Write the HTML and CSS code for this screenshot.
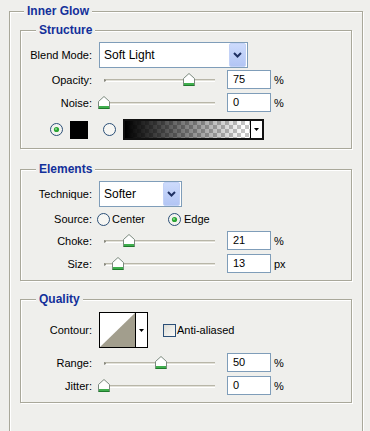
FILE: index.html
```html
<!DOCTYPE html>
<html>
<head>
<meta charset="utf-8">
<link rel="stylesheet" href="styles.css">
</head>
<body>
<fieldset class="group outer">
  <legend>Inner Glow</legend>

  <fieldset class="group inner structure">
    <legend>Structure</legend>
    <div class="row r-select r-blend">
      <span class="lbl">Blend Mode:</span>
      <div class="select wide"><span>Soft Light</span><span class="sel-btn"><svg width="9" height="6" viewBox="0 0 9 6"><path d="M1 1 L4.5 4.5 L8 1" fill="none" stroke="#1f3163" stroke-width="2"/></svg></span></div>
    </div>
    <div class="row r-slider r-first">
      <span class="lbl">Opacity:</span>
      <div class="slider"><div class="track"></div><svg class="thumb" style="left:85px" width="12" height="13" viewBox="0 0 12 13"><path d="M0.5 5.5 L6 0.5 L11.5 5.5 V12.5 H0.5 Z" fill="#fff" stroke="#7b8a7e"/><rect x="1" y="10" width="10" height="2" fill="#3fae4d"/><path d="M0.5 12.5 H11.5" stroke="#1f7a2c"/></svg></div>
      <div class="num">75</div><span class="unit">%</span>
    </div>
    <div class="row r-slider r-next">
      <span class="lbl">Noise:</span>
      <div class="slider"><div class="track"></div><svg class="thumb" style="left:0px" width="12" height="13" viewBox="0 0 12 13"><path d="M0.5 5.5 L6 0.5 L11.5 5.5 V12.5 H0.5 Z" fill="#fff" stroke="#7b8a7e"/><rect x="1" y="10" width="10" height="2" fill="#3fae4d"/><path d="M0.5 12.5 H11.5" stroke="#1f7a2c"/></svg></div>
      <div class="num">0</div><span class="unit">%</span>
    </div>
    <div class="row r-color">
      <svg class="radio first" width="13" height="13" viewBox="0 0 13 13"><circle cx="6.5" cy="6.5" r="6" fill="#f3f3ef" stroke="#2b4f77"/><circle cx="6.5" cy="6.5" r="2.6" fill="#2aa534"/><circle cx="6" cy="6" r="1" fill="#8fdc8f"/></svg>
      <div class="swatch"></div>
      <svg class="radio second" width="13" height="13" viewBox="0 0 13 13"><circle cx="6.5" cy="6.5" r="6" fill="#f6f6f3" stroke="#2b4f77"/></svg>
      <div class="gradient"><div class="grad-fill"></div><div class="grad-btn"><svg width="5" height="3" viewBox="0 0 5 3"><path d="M0 0 H5 L2.5 3 Z" fill="#000"/></svg></div></div>
    </div>
  </fieldset>

  <fieldset class="group inner elements">
    <legend>Elements</legend>
    <div class="row r-select r-tech">
      <span class="lbl">Technique:</span>
      <div class="select narrow"><span>Softer</span><span class="sel-btn"><svg width="9" height="6" viewBox="0 0 9 6"><path d="M1 1 L4.5 4.5 L8 1" fill="none" stroke="#1f3163" stroke-width="2"/></svg></span></div>
    </div>
    <div class="row r-source">
      <span class="lbl">Source:</span>
      <svg class="radio first" width="13" height="13" viewBox="0 0 13 13"><circle cx="6.5" cy="6.5" r="6" fill="#f6f6f3" stroke="#2b4f77"/></svg>
      <span class="opt-text">Center</span>
      <svg class="radio second" width="13" height="13" viewBox="0 0 13 13"><circle cx="6.5" cy="6.5" r="6" fill="#f3f3ef" stroke="#2b4f77"/><circle cx="6.5" cy="6.5" r="2.6" fill="#2aa534"/><circle cx="6" cy="6" r="1" fill="#8fdc8f"/></svg>
      <span class="opt-text edge">Edge</span>
    </div>
    <div class="row r-slider r-first">
      <span class="lbl">Choke:</span>
      <div class="slider"><div class="track"></div><svg class="thumb" style="left:25px" width="12" height="13" viewBox="0 0 12 13"><path d="M0.5 5.5 L6 0.5 L11.5 5.5 V12.5 H0.5 Z" fill="#fff" stroke="#7b8a7e"/><rect x="1" y="10" width="10" height="2" fill="#3fae4d"/><path d="M0.5 12.5 H11.5" stroke="#1f7a2c"/></svg></div>
      <div class="num">21</div><span class="unit">%</span>
    </div>
    <div class="row r-slider r-next">
      <span class="lbl">Size:</span>
      <div class="slider"><div class="track"></div><svg class="thumb" style="left:14px" width="12" height="13" viewBox="0 0 12 13"><path d="M0.5 5.5 L6 0.5 L11.5 5.5 V12.5 H0.5 Z" fill="#fff" stroke="#7b8a7e"/><rect x="1" y="10" width="10" height="2" fill="#3fae4d"/><path d="M0.5 12.5 H11.5" stroke="#1f7a2c"/></svg></div>
      <div class="num">13</div><span class="unit">px</span>
    </div>
  </fieldset>

  <fieldset class="group inner quality">
    <legend>Quality</legend>
    <div class="row r-contour">
      <span class="lbl">Contour:</span>
      <div class="contour">
        <svg class="graph" width="35" height="34" viewBox="0 0 35 34"><rect width="35" height="34" fill="#fff"/><path d="M0 34 L35 0 V34 Z" fill="#a29e8d"/></svg>
        <div class="contour-btn"><svg width="5" height="3" viewBox="0 0 5 3"><path d="M0 0 H5 L2.5 3 Z" fill="#000"/></svg></div>
      </div>
      <div class="checkbox"></div>
      <span class="cb-label">Anti-aliased</span>
    </div>
    <div class="row r-slider r-range">
      <span class="lbl">Range:</span>
      <div class="slider"><div class="track"></div><svg class="thumb" style="left:57px" width="12" height="13" viewBox="0 0 12 13"><path d="M0.5 5.5 L6 0.5 L11.5 5.5 V12.5 H0.5 Z" fill="#fff" stroke="#7b8a7e"/><rect x="1" y="10" width="10" height="2" fill="#3fae4d"/><path d="M0.5 12.5 H11.5" stroke="#1f7a2c"/></svg></div>
      <div class="num">50</div><span class="unit">%</span>
    </div>
    <div class="row r-slider r-next">
      <span class="lbl">Jitter:</span>
      <div class="slider"><div class="track"></div><svg class="thumb" style="left:0px" width="12" height="13" viewBox="0 0 12 13"><path d="M0.5 5.5 L6 0.5 L11.5 5.5 V12.5 H0.5 Z" fill="#fff" stroke="#7b8a7e"/><rect x="1" y="10" width="10" height="2" fill="#3fae4d"/><path d="M0.5 12.5 H11.5" stroke="#1f7a2c"/></svg></div>
      <div class="num">0</div><span class="unit">%</span>
    </div>
  </fieldset>
</fieldset>
</body>
</html>
```

FILE: styles.css
```css
* { box-sizing: border-box; }
html, body { margin: 0; padding: 0; }
body {
  width: 370px;
  height: 431px;
  overflow: hidden;
  background: #efefec;
  font-family: "Liberation Sans", Arial, sans-serif;
  font-size: 11px;
  color: #000;
}
.group {
  border: 1px solid #a9a89a;
  box-shadow: 1px 1px 0 #fff, inset 1px 1px 0 #fff;
  margin: 0;
  padding: 0;
  min-inline-size: 0;
}
.group > legend {
  font-weight: bold;
  font-size: 12px;
  line-height: 14px;
  color: #13309a;
  padding: 0 3px;
  background: #efefec;
}
.outer {
  margin: 4px 0 0 9px;
  width: 354px;
  height: 427px;
  padding: 0 10px;
  border-bottom: none;
}
.outer > legend { margin-left: 4px; }
.inner { width: 332px; }
.inner > legend { margin-left: 15px; }
.structure { margin-top: 5px; padding-bottom: 8px; }
.elements { margin-top: 13px; padding-bottom: 7px; }
.quality { margin-top: 11px; padding-bottom: 7px; }

.row { display: flex; align-items: center; }
.lbl { width: 71px; text-align: right; flex: none; }

.r-select { height: 26px; margin-top: 5px; }
.r-select .lbl { margin-right: 7px; }
.select {
  height: 26px;
  border: 1px solid #7f9db9;
  background: #fff;
  display: flex;
  align-items: center;
  justify-content: space-between;
  padding-left: 4px;
  font-size: 12px;
  flex: none;
}
.select.wide { width: 149px; }
.select.narrow { width: 83px; }
.sel-btn {
  width: 17px;
  height: 24px;
  margin-right: 1px;
  background: linear-gradient(#cddbfc, #b2c5f4);
  border: 1px solid #c3d2f7;
  border-radius: 2px;
  display: flex;
  align-items: center;
  justify-content: center;
}

.r-slider { height: 19px; }
.r-slider .lbl { margin-right: 6px; }
.r-first { margin-top: 2px; }
.r-next { margin-top: 4px; }
.r-range { margin-top: 5px; }
.slider { position: relative; width: 123px; height: 19px; flex: none; }
.track {
  position: absolute;
  left: 6px;
  right: 6px;
  top: 9px;
  height: 3px;
  border-top: 1px solid #b8b6a8;
  border-bottom: 1px solid #fff;
  background: #e2e1d9;
  border-left: 2px solid #8a8a80;
}
.thumb { position: absolute; top: 3px; }
.num {
  width: 44px;
  height: 19px;
  border: 1px solid #7f9db9;
  background: #fff;
  margin-left: 6px;
  padding-left: 5px;
  line-height: 17px;
  flex: none;
}
.unit { margin-left: 3px; }

.r-color { height: 21px; margin-top: 7px; }
.radio { flex: none; }
.r-color .radio.first { margin-left: 29px; }
.r-color .radio.second { margin-left: 15px; }
.swatch { width: 18px; height: 18px; background: #000; margin-left: 7px; flex: none; }
.gradient {
  margin-left: 7px;
  width: 141px;
  height: 21px;
  border: 2px solid #111;
  display: flex;
  flex: none;
}
.grad-fill {
  flex: 1;
  background:
    linear-gradient(to right, #000 0%, rgba(0,0,0,0.75) 25%, rgba(0,0,0,0) 95%),
    repeating-conic-gradient(#c4c4c4 0 25%, #fff 0 50%) 0 0 / 8px 8px;
}
.grad-btn {
  width: 12px;
  border-left: 1px solid #000;
  background: #fff;
  display: flex;
  align-items: center;
  justify-content: center;
}

.r-source { height: 20px; margin-top: 2px; }
.r-source .lbl { margin-right: 5px; }
.r-source .radio.second { margin-left: 23px; }
.opt-text { margin-left: 2px; }
.opt-text.edge { margin-left: 3px; }

.r-contour { height: 36px; margin-top: 6px; }
.r-contour .lbl { margin-right: 7px; }
.contour {
  width: 49px;
  height: 36px;
  border: 1px solid #000;
  background: #fff;
  display: flex;
  flex: none;
}
.contour .graph { display: block; border-right: 1px solid #000; width: 36px; }
.contour-btn {
  flex: 1;
  display: flex;
  align-items: center;
  justify-content: center;
}
.checkbox {
  width: 13px;
  height: 13px;
  margin-left: 15px;
  border: 1px solid #2b4f77;
  background: linear-gradient(135deg, #dcdcd6, #fbfbf9);
  flex: none;
}
.cb-label { margin-left: 1px; }
```
